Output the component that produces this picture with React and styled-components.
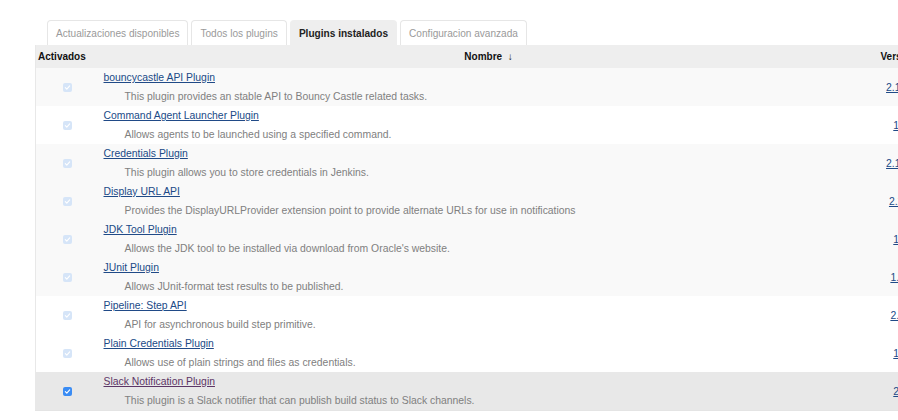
import React from 'react';
import styled, { createGlobalStyle } from 'styled-components';

const GlobalStyle = createGlobalStyle`
  html, body {
    margin: 0;
    padding: 0;
    overflow: hidden;
    background: #fff;
  }
  body {
    font-family: "Liberation Sans", Helvetica, Arial, sans-serif;
    font-size: 10px;
    color: #333;
  }
`;

const plugins = [
  { name: 'bouncycastle API Plugin', description: 'This plugin provides an stable API to Bouncy Castle related tasks.', version: '2.16.2' },
  { name: 'Command Agent Launcher Plugin', description: 'Allows agents to be launched using a specified command.', version: '1.2' },
  { name: 'Credentials Plugin', description: 'This plugin allows you to store credentials in Jenkins.', version: '2.1.16' },
  { name: 'Display URL API', description: 'Provides the DisplayURLProvider extension point to provide alternate URLs for use in notifications', version: '2.2.0' },
  { name: 'JDK Tool Plugin', description: "Allows the JDK tool to be installed via download from Oracle's website.", version: '1.0' },
  { name: 'JUnit Plugin', description: 'Allows JUnit-format test results to be published.', version: '1.24' },
  { name: 'Pipeline: Step API', description: 'API for asynchronous build step primitive.', version: '2.14' },
  { name: 'Plain Credentials Plugin', description: 'Allows use of plain strings and files as credentials.', version: '1.4' },
  { name: 'Slack Notification Plugin', description: 'This plugin is a Slack notifier that can publish build status to Slack channels.', version: '2.3', enabled: true, visited: true },
];

// rows 1 and 3-6 carry the light stripe in the original
const stripedRows = [0, 2, 3, 4, 5];

const tabs = [
  'Actualizaciones disponibles',
  'Todos los plugins',
  'Plugins instalados',
  'Configuracion avanzada',
];

const Page = styled.div`
  padding: 20px 0 0 35px;
  width: 1000px;
`;

const TabBar = styled.div`
  display: flex;
  gap: 3px;
  padding-left: 12px;
  height: 25px;
`;

const Tab = styled.div`
  display: flex;
  align-items: center;
  padding: 0 8px;
  border: 1px solid ${({ $active }) => ($active ? '#eee' : '#e6e6e6')};
  border-bottom: none;
  border-radius: 4px 4px 0 0;
  background: ${({ $active }) => ($active ? '#eee' : '#fff')};
  color: ${({ $active }) => ($active ? '#222' : '#9a9a9a')};
  font-weight: ${({ $active }) => ($active ? 'bold' : 'normal')};
  font-size: 10.1px;
  white-space: nowrap;
`;

const Table = styled.table`
  border-collapse: collapse;
  table-layout: fixed;
  width: 925px;
  border-left: 1px solid #e8e8e8;
  border-bottom: 1px solid #e4e4e4;
`;

const HeadCell = styled.th`
  height: 23px;
  padding: 0 2px;
  background: #eee;
  font-size: 10px;
  font-weight: bold;
  color: #111;
  text-align: ${({ $align }) => $align || 'center'};
  white-space: nowrap;
`;

const Row = styled.tr`
  background: ${({ $variant }) =>
    $variant === 'selected' ? '#e8e8e8' : $variant === 'striped' ? '#f9f9f9' : '#fff'};
`;

const Cell = styled.td`
  height: 38px;
  padding: 0;
  vertical-align: middle;
  text-align: ${({ $align }) => $align || 'left'};
`;

const Check = styled.span`
  display: inline-flex;
  align-items: center;
  justify-content: center;
  width: 9px;
  height: 9px;
  border-radius: 2px;
  background: ${({ $enabled }) => ($enabled ? '#3a8cf4' : '#d6e5f8')};
  vertical-align: middle;
`;

const PluginLink = styled.a`
  display: block;
  width: max-content;
  margin: 2px 0 0 5px;
  line-height: 15px;
  font-size: 10.4px;
  color: ${({ $visited }) => ($visited ? '#5c3566' : '#204a87')};
  text-decoration: underline;
`;

const Description = styled.div`
  margin: 4px 0 2px 26px;
  line-height: 15px;
  font-size: 10.4px;
  color: #808080;
  white-space: nowrap;
`;

const VersionLink = styled.a`
  font-size: 10.4px;
  color: #204a87;
  text-decoration: underline;
`;

const CheckBox = ({ enabled }) => (
  <Check $enabled={enabled}>
    <svg width="7" height="7" viewBox="0 0 8 8">
      <path d="M1.5 4.2 L3.2 5.8 L6.5 2.2" fill="none" stroke="#fff" strokeWidth="1.3" strokeLinecap="round" strokeLinejoin="round" />
    </svg>
  </Check>
);

const App = () => {
  const getVariant = (plugin, index) => {
    if (plugin.enabled) return 'selected';
    return stripedRows.includes(index) ? 'striped' : 'plain';
  };

  return (
    <Page>
      <GlobalStyle />
      <TabBar>
        {tabs.map((tab, index) => (
          <Tab key={tab} $active={index === 2}>{tab}</Tab>
        ))}
      </TabBar>
      <Table>
        <colgroup>
          <col style={{ width: 63 }} />
          <col style={{ width: 780 }} />
          <col style={{ width: 44 }} />
          <col />
        </colgroup>
        <thead>
          <tr>
            <HeadCell $align="left">Activados</HeadCell>
            <HeadCell>Nombre&nbsp;&nbsp;↓</HeadCell>
            <HeadCell $align="left">Version</HeadCell>
            <HeadCell />
          </tr>
        </thead>
        <tbody>
          {plugins.map((plugin, index) => (
            <Row key={plugin.name} $variant={getVariant(plugin, index)}>
              <Cell $align="center">
                <CheckBox enabled={plugin.enabled} />
              </Cell>
              <Cell>
                <PluginLink href="#" $visited={plugin.visited}>{plugin.name}</PluginLink>
                <Description>{plugin.description}</Description>
              </Cell>
              <Cell $align="center">
                <VersionLink href="#">{plugin.version}</VersionLink>
              </Cell>
              <Cell />
            </Row>
          ))}
        </tbody>
      </Table>
    </Page>
  );
};

export default App;
